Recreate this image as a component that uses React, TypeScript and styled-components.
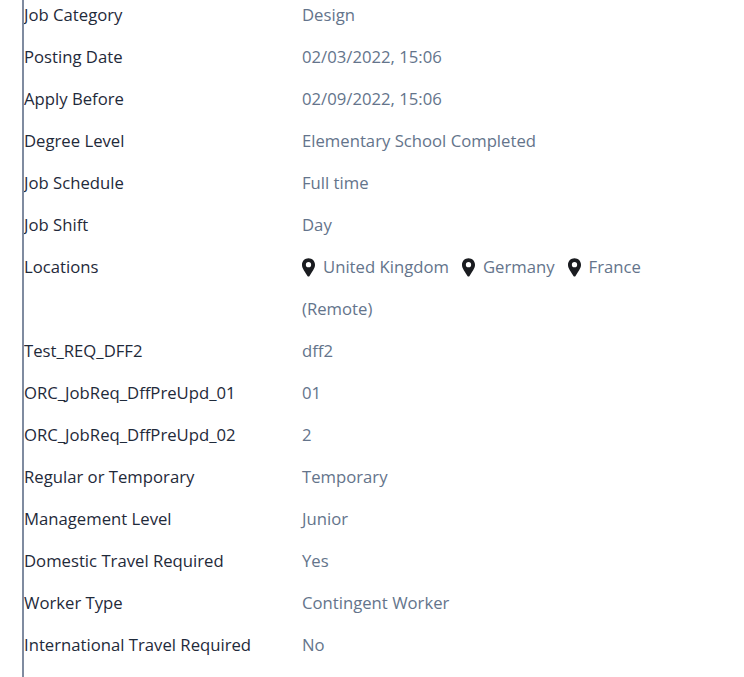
import React from "react";
import styled, { createGlobalStyle } from "styled-components";

const rows: { label: string; value?: string; locations?: string[]; extra?: string }[] = [
  { label: "Job Category", value: "Design" },
  { label: "Posting Date", value: "02/03/2022, 15:06" },
  { label: "Apply Before", value: "02/09/2022, 15:06" },
  { label: "Degree Level", value: "Elementary School Completed" },
  { label: "Job Schedule", value: "Full time" },
  { label: "Job Shift", value: "Day" },
  { label: "Locations", locations: ["United Kingdom", "Germany", "France"], extra: "(Remote)" },
  { label: "Test_REQ_DFF2", value: "dff2" },
  { label: "ORC_JobReq_DffPreUpd_01", value: "01" },
  { label: "ORC_JobReq_DffPreUpd_02", value: "2" },
  { label: "Regular or Temporary", value: "Temporary" },
  { label: "Management Level", value: "Junior" },
  { label: "Domestic Travel Required", value: "Yes" },
  { label: "Worker Type", value: "Contingent Worker" },
  { label: "International Travel Required", value: "No" },
];

function Pin() {
  return (
    <PinIcon viewBox="0 0 384 540" aria-hidden="true">
      <path fillRule="evenodd" d="M192 0C86 0 0 84 0 190c0 76 32 130 166 336 13 18 39 18 52 0 134-206 166-260 166-336C384 84 298 0 192 0zm0 265a78 78 0 1 1 0-156 78 78 0 0 1 0 156z" />
    </PinIcon>
  );
}

export default function App() {
  return (
    <Page>
      <GlobalStyle />
      <List>
        {rows.map((row) => (
          <Row key={row.label}>
            <Label>{row.label}</Label>
            <Value>
              {row.value}
              {row.locations && (
                <LocationList>
                  {row.locations.map((loc) => (
                    <Location key={loc}>
                      <Pin />
                      {loc}
                    </Location>
                  ))}
                </LocationList>
              )}
              {row.extra && <div>{row.extra}</div>}
            </Value>
          </Row>
        ))}
      </List>
    </Page>
  );
}

const GlobalStyle = createGlobalStyle`
  html, body {
    margin: 0;
    padding: 0;
    background: #fff;
    overflow: hidden;
  }
`;

const Page = styled.div`
  height: 677px;
  overflow: hidden;
  margin-left: 22px;
  border-left: 2px solid #7f8ba0;
  font-family: "Open Sans", "Noto Sans", sans-serif;
  font-size: 16.7px;
`;

const List = styled.div`
  margin-top: -6px;
`;

const Row = styled.div`
  display: flex;
  line-height: 42px;
`;

const Label = styled.div`
  width: 278px;
  flex-shrink: 0;
  color: #1f2a3a;
`;

const Value = styled.div`
  width: 360px;
  color: #64748b;
`;

const LocationList = styled.div`
  display: flex;
  height: 42px;
  gap: 13px;
`;

const Location = styled.span`
  display: flex;
  align-items: center;
`;

const PinIcon = styled.svg`
  width: 13px;
  height: 19px;
  margin-right: 8px;
  fill: #1a1c20;
`;
